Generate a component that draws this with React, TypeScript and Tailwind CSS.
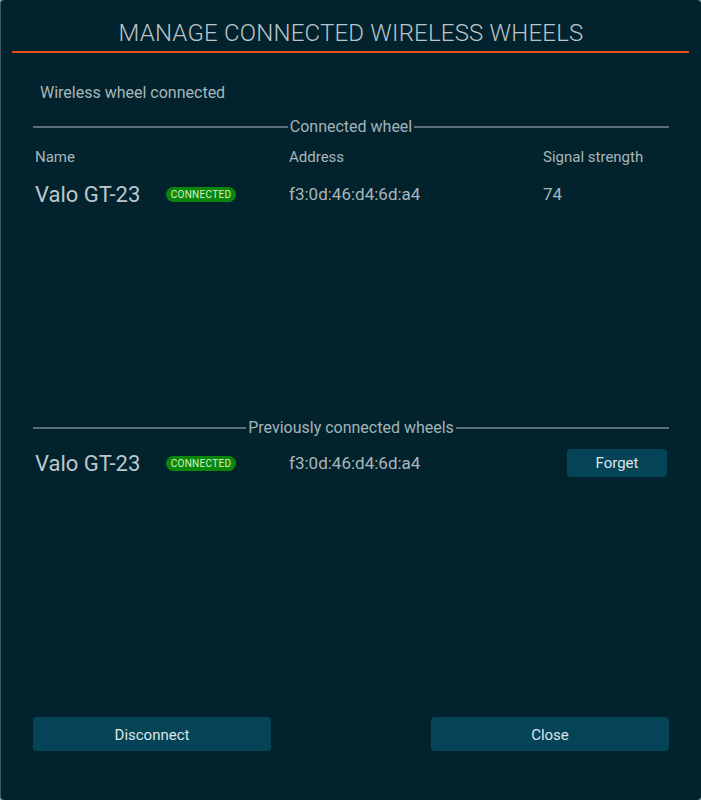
import React from "react";

interface Wheel {
  name: string;
  address: string;
  signal?: number;
}

const connected: Wheel = { name: "Valo GT-23", address: "f3:0d:46:d4:6d:a4", signal: 74 };
const previous: Wheel[] = [{ name: "Valo GT-23", address: "f3:0d:46:d4:6d:a4" }];

const font = { fontFamily: "Roboto, 'Liberation Sans', sans-serif" };

// fieldset style divider with centered label
function Legend({ label }: { label: string }) {
  return (
    <div className="flex items-center h-5 gap-[2px]">
      <div className="flex-1 h-[2px] bg-[#5a7077]" />
      <span className="text-[16px] leading-5 text-[#a3b3b8]">{label}</span>
      <div className="flex-1 h-[2px] bg-[#5a7077]" />
    </div>
  );
}

function Badge() {
  return (
    <span className="inline-flex items-center justify-center w-[70px] h-[15px] rounded-full bg-[#0a870a] text-[10px] leading-none text-[#d6f2c6] tracking-[0.3px]">
      CONNECTED
    </span>
  );
}

export default function App() {
  return (
    <div className="w-[701px] h-[800px] bg-[#9aa4a8]" style={font}>
      <div className="w-full h-full flex flex-col rounded-[4px] bg-[#02232e] border-l border-[#3c5a62]">
        {/* title */}
        <h1 className="pt-[19px] text-center text-[24px] leading-[28px] font-light text-[#b9c5c9] tracking-[0.2px]">
          MANAGE CONNECTED WIRELESS WHEELS
        </h1>
        <div className="ml-[11px] mr-[12px] mt-[4px] h-[2px] bg-[#e0501c]" />

        <p className="mt-[30px] pl-[39px] text-[16px] leading-5 text-[#a9b6ba]">
          Wireless wheel connected
        </p>

        {/* connected wheel */}
        <div className="mt-[14px] pl-[32px] pr-[32px] h-[301px]">
          <Legend label="Connected wheel" />
          <div className="mt-[10px] pl-[2px] grid grid-cols-[254px_254px_1fr] text-[15px] leading-5 text-[#a9b6ba]">
            <span>Name</span>
            <span>Address</span>
            <span>Signal strength</span>
          </div>
          <div className="mt-[15px] pl-[2px] grid grid-cols-[254px_254px_1fr] items-center h-6">
            <div className="flex items-center">
              <span className="w-[131px] text-[22px] leading-6 text-[#bcc7cb]">{connected.name}</span>
              <Badge />
            </div>
            <span className="text-[17px] text-[#a9b6ba]">{connected.address}</span>
            <span className="text-[17px] text-[#a9b6ba]">{connected.signal}</span>
          </div>
        </div>

        {/* previously connected */}
        <div className="pl-[32px] pr-[32px] flex-1">
          <Legend label="Previously connected wheels" />
          {previous.map((w, i) => (
            <div key={i} className="mt-[11px] pl-[2px] flex items-center h-[28px]">
              <div className="w-[254px] flex items-center pt-[1px]">
                <span className="w-[131px] text-[22px] leading-6 text-[#bcc7cb]">{w.name}</span>
                <Badge />
              </div>
              <span className="flex-1 pt-[1px] text-[17px] text-[#a9b6ba]">{w.address}</span>
              <button className="w-[100px] h-[28px] mr-[2px] rounded-[4px] bg-[#054456] text-[15px] text-[#dbe6e9]">
                Forget
              </button>
            </div>
          ))}
        </div>

        {/* footer buttons */}
        <div className="pl-[32px] pr-[32px] pb-[49px] flex justify-between">
          <button className="w-[238px] h-[34px] pt-[2px] rounded-[4px] bg-[#054456] text-[15px] text-[#dbe6e9]">
            Disconnect
          </button>
          <button className="w-[238px] h-[34px] pt-[2px] rounded-[4px] bg-[#054456] text-[15px] text-[#dbe6e9]">
            Close
          </button>
        </div>
      </div>
    </div>
  );
}
